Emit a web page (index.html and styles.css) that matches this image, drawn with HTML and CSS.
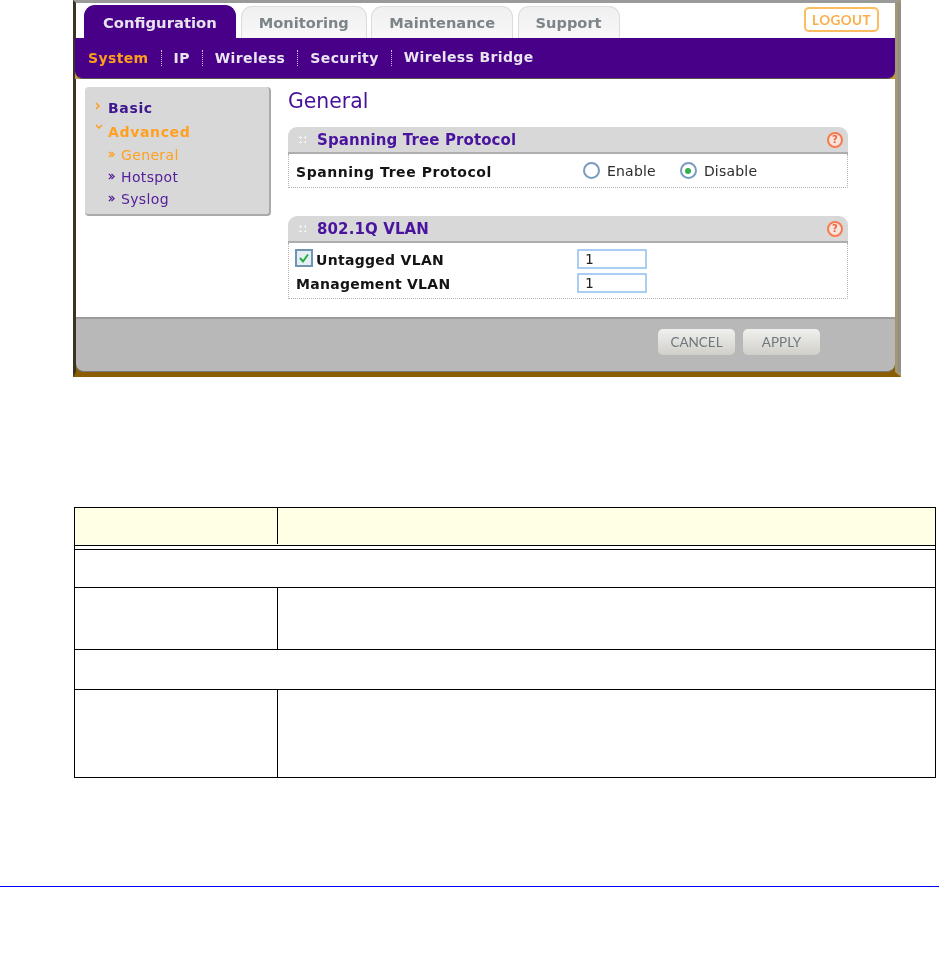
FILE: index.html
```html
<!DOCTYPE html>
<html lang="en">
<head>
<meta charset="utf-8">
<title>General</title>
<link rel="stylesheet" href="styles.css">
</head>
<body>
<section class="shot">
  <header class="topbar">
    <div class="tab tab-active">Configuration</div>
    <div class="tab">Monitoring</div>
    <div class="tab">Maintenance</div>
    <div class="tab">Support</div>
    <div class="logout">LOGOUT</div>
  </header>
  <div class="subnav-wrap">
    <nav class="subnav">
      <span class="sub sub-active">System</span><i class="sep"></i>
      <span class="sub">IP</span><i class="sep"></i>
      <span class="sub">Wireless</span><i class="sep"></i>
      <span class="sub">Security</span><i class="sep"></i>
      <span class="sub sub-raised">Wireless Bridge</span>
    </nav>
  </div>
  <div class="panel">
    <aside class="side">
      <div class="side-item side-head"><svg class="chev" viewBox="0 0 6 8"><path d="M1 1l3 3-3 3" /></svg>Basic</div>
      <div class="side-item side-head side-on"><svg class="chev chev-down" viewBox="0 0 8 6"><path d="M1 1l3 3 3-3" /></svg>Advanced</div>
      <div class="side-item side-sub side-on"><svg class="dchev" viewBox="0 0 8 8"><path d="M1 1l3 3-3 3M4 1l3 3-3 3" /></svg>General</div>
      <div class="side-item side-sub"><svg class="dchev" viewBox="0 0 8 8"><path d="M1 1l3 3-3 3M4 1l3 3-3 3" /></svg>Hotspot</div>
      <div class="side-item side-sub"><svg class="dchev" viewBox="0 0 8 8"><path d="M1 1l3 3-3 3M4 1l3 3-3 3" /></svg>Syslog</div>
    </aside>
    <main class="content">
      <h1 class="title">General</h1>
      <div class="box box-stp">
        <div class="box-head">
          <span class="grip"></span><span class="box-title">Spanning Tree Protocol</span>
          <span class="help">?</span>
        </div>
        <div class="box-body row-stp">
          <span class="label label-stp">Spanning Tree Protocol</span>
          <span class="radio"></span><span class="opt opt-first">Enable</span>
          <span class="radio radio-on"></span><span class="opt">Disable</span>
        </div>
      </div>
      <div class="box">
        <div class="box-head">
          <span class="grip"></span><span class="box-title">802.1Q VLAN</span>
          <span class="help">?</span>
        </div>
        <div class="box-body vlan">
          <div class="vlan-row">
            <span class="check"><svg viewBox="0 0 14 14"><path d="M3 7l3 3.5 5-7" /></svg></span>
            <span class="label label-u">Untagged VLAN</span>
            <span class="input">1</span>
          </div>
          <div class="vlan-row">
            <span class="label label-m">Management VLAN</span>
            <span class="input">1</span>
          </div>
        </div>
      </div>
    </main>
  </div>
  <footer class="foot">
    <div class="btn">CANCEL</div>
    <div class="btn">APPLY</div>
  </footer>
</section>

<section class="table">
  <div class="cell head-a"></div>
  <div class="cell head-b"></div>
  <div class="rule"></div>
  <div class="cell span row-a"></div>
  <div class="cell col-a row-b"></div>
  <div class="cell col-b row-b"></div>
  <div class="cell span row-c"></div>
  <div class="cell col-a row-d"></div>
  <div class="cell col-b row-d"></div>
</section>

<hr class="pagerule">
</body>
</html>
```

FILE: styles.css
```css
* { box-sizing: border-box; }
html, body { margin: 0; padding: 0; background: #fff; }
body { height: 956px; overflow: hidden; font-family: "DejaVu Sans", Verdana, sans-serif; }

.shot {
  position: relative;
  width: 828px; height: 377px; margin-left: 73px;
  background: #8a5c06;
  border-left: 3px solid #3a3226;
  border-right: 6px solid #a59672;
  border-bottom: 5px solid #8a5c06;
  border-top: 3px solid #9a9a9a;
  display: flex; flex-direction: column;
  filter: blur(0.45px);
}
.shot::after {
  content: ""; position: absolute; top: 0; bottom: 0; right: -6px; width: 3px; background: #8f8f8b;
}

.topbar { height: 35px; display: flex; align-items: flex-end; padding-left: 8px; flex: none; background: #fff; }
.tab {
  height: 32px; padding: 0 17px; margin-right: 4.5px;
  display: flex; align-items: center;
  font-size: 14.6px; font-weight: 700; color: #7d8488;
  background: linear-gradient(#f0f0f0, #f8f8f8);
  border: 1px solid #dcdcdc; border-bottom: 0;
  border-radius: 11px 11px 0 0;
}
.tab-active { height: 33px; background: #480088; border-color: #480088; color: #e6e2ee; padding: 0 18px; font-size: 14.8px; margin-right: 5px; }
.logout {
  margin-left: auto; margin-right: 16px; align-self: flex-start; margin-top: 4px;
  width: 75px; height: 25px; display: flex; align-items: center; justify-content: center;
  border: 2px solid #fcbc62; border-radius: 5px;
  font-family: Lato, sans-serif; font-weight: 700; font-size: 13.5px; letter-spacing: .4px; color: #f9ae4b;
}

.subnav-wrap { background: #c8963c; flex: none; margin-left: -1px; }
.subnav {
  height: 41px; background: #480088; border-bottom: 1px solid #555;
  border-radius: 0 0 8px 8px;
  display: flex; align-items: center; padding-left: 13px;
  font-size: 14px; font-weight: 700; color: #e8e4f0;
  letter-spacing: .37px;
}
.sub { position: relative; top: 0; }
.sub-raised { top: -1px; }
.sub-active { color: #ff9d1e; }
.sep { width: 0; height: 16px; margin: 0 12px; border-left: 1px dotted #c9bfdc; }

.panel { flex: 1; display: flex; padding: 8px 0 0 9px; min-height: 0; background: #fff; }
.side {
  width: 186px; height: 129px; flex: none;
  background: #d8d8d8; border-radius: 4px;
  border-right: 2px solid #aaa; border-bottom: 2px solid #aaa;
  padding-top: 9px; padding-left: 8px;
}
.side-item { display: flex; align-items: center; white-space: nowrap; height: 22px; font-size: 14px; color: #55209a; }
.side-head { font-weight: 700; color: #3e1690; letter-spacing: .65px; height: 24px; padding-left: 15px; position: relative; }
.side-sub { padding-left: 28px; position: relative; letter-spacing: .35px; }
.side-on { color: #ffa020; }
.chev, .dchev { position: absolute; fill: none; stroke: #ff9d1e; stroke-width: 1.5; }
.chev { left: 2px; top: 6px; width: 6px; height: 8px; }
.chev-down { width: 8px; height: 6px; top: 4px; }
.dchev { left: 15px; top: 7px; width: 7px; height: 7px; stroke: #55209a; }
.side-on .dchev { stroke: #ff9d1e; }

.content { flex: none; width: 560px; margin-left: 17px; }
.title { margin: 4px 0 16px; font-size: 20.4px; line-height: 20px; font-weight: 400; color: #46109a; }
.box { width: 560px; }
.box-stp { margin-bottom: 28px; }
.box-head {
  height: 27px; background: #d8d8d8; border-radius: 9px 9px 0 0;
  border-bottom: 2px solid #aeaeae;
  display: flex; align-items: center; padding: 0 5px 0 11px;
}
.grip { width: 7px; height: 7px; margin-right: 11px; background: radial-gradient(circle at 1.5px 1.5px, #f4f4f4 1.2px, transparent 1.3px) 0 0 / 5px 5px; }
.box-title { font-size: 15px; font-weight: 700; color: #4a149e; letter-spacing: .11px; }
.help {
  margin-left: auto; width: 16px; height: 16px; border-radius: 50%;
  border: 2px solid #fa7a4e; color: #f0623a; background: #f4e6df;
  display: flex; align-items: center; justify-content: center;
  font-size: 10px; font-weight: 700; line-height: 1;
}
.box-body { border: 1px dotted #b4b4b4; border-top: 0; }
.row-stp { height: 34px; display: flex; align-items: center; padding-left: 7px; }
.label { font-size: 14px; font-weight: 700; color: #141414; letter-spacing: .55px; white-space: nowrap; position: relative; top: 1px; }
.label-stp { width: 287px; }
.radio {
  width: 17px; height: 17px; border-radius: 50%; border: 2px solid #7a9cbc; background: #fff; flex: none;
  display: flex; align-items: center; justify-content: center; margin-right: 7px;
}
.radio-on::after { content: ""; width: 6px; height: 6px; border-radius: 50%; background: #35b04a; }
.opt { font-size: 14px; color: #2c2c2c; letter-spacing: .2px; }
.opt-first { margin-right: 24px; }
.vlan { height: 56px; padding: 6px 0 0 6px; display: flex; flex-direction: column; gap: 4px; }
.vlan-row { display: flex; align-items: center; height: 20px; }
.check {
  width: 18px; height: 18px; border: 2px solid #6f94b4; background: #e4eef4; flex: none; margin-right: 3px;
  display: flex; position: relative; top: -1px;
}
.check svg { width: 14px; height: 14px; fill: none; stroke: #25ad3c; stroke-width: 2; }
.label-u { width: 261px; letter-spacing: .3px; }
.label-m { width: 281px; margin-left: 1px; letter-spacing: .28px; }
.input {
  width: 70px; height: 20px; border: 2px solid #a9cdf3; background: #fff;
  font-family: "DejaVu Sans Mono", monospace; font-size: 14px; color: #222; padding-left: 6px;
  display: flex; align-items: center;
}

.foot {
  flex: none; height: 55px; margin-bottom: 0; background: #b8b8b8;
  border-top: 2px solid #9c9c9c;
  border-radius: 0 0 8px 8px;
  border-bottom: 1px solid #777;
  display: flex; justify-content: flex-end; align-items: flex-start; gap: 8px; padding: 10px 75px 0 0;
}
.btn {
  width: 77px; height: 26px; border-radius: 5px;
  background: linear-gradient(#f0f0ee, #d0cfc9);
  display: flex; align-items: center; justify-content: center;
  font-family: Lato, sans-serif; font-size: 13.5px; color: #6e777c;
}

.table {
  width: 862px; margin: 130px 0 0 74px;
  display: grid; grid-template-columns: 203px 1fr;
  border: 1px solid #000;
}
.cell { min-width: 0; }
.head-a, .head-b { height: 37px; background: #ffffe6; }
.head-a { background: linear-gradient(#000, #000) right top / 1px 36px no-repeat, #ffffe6; }
.rule { grid-column: 1 / -1; height: 5px; border-top: 1px solid #000; border-bottom: 1px solid #000; }
.span { grid-column: 1 / -1; }
.row-a { height: 38px; border-bottom: 1px solid #000; }
.row-b { height: 62px; border-bottom: 1px solid #000; }
.col-a { border-right: 1px solid #000; }
.row-c { height: 40px; border-bottom: 1px solid #000; }
.row-d { height: 87px; }

.pagerule { margin: 108px 0 0; border: 0; height: 1px; background: #0000ff; }
```
